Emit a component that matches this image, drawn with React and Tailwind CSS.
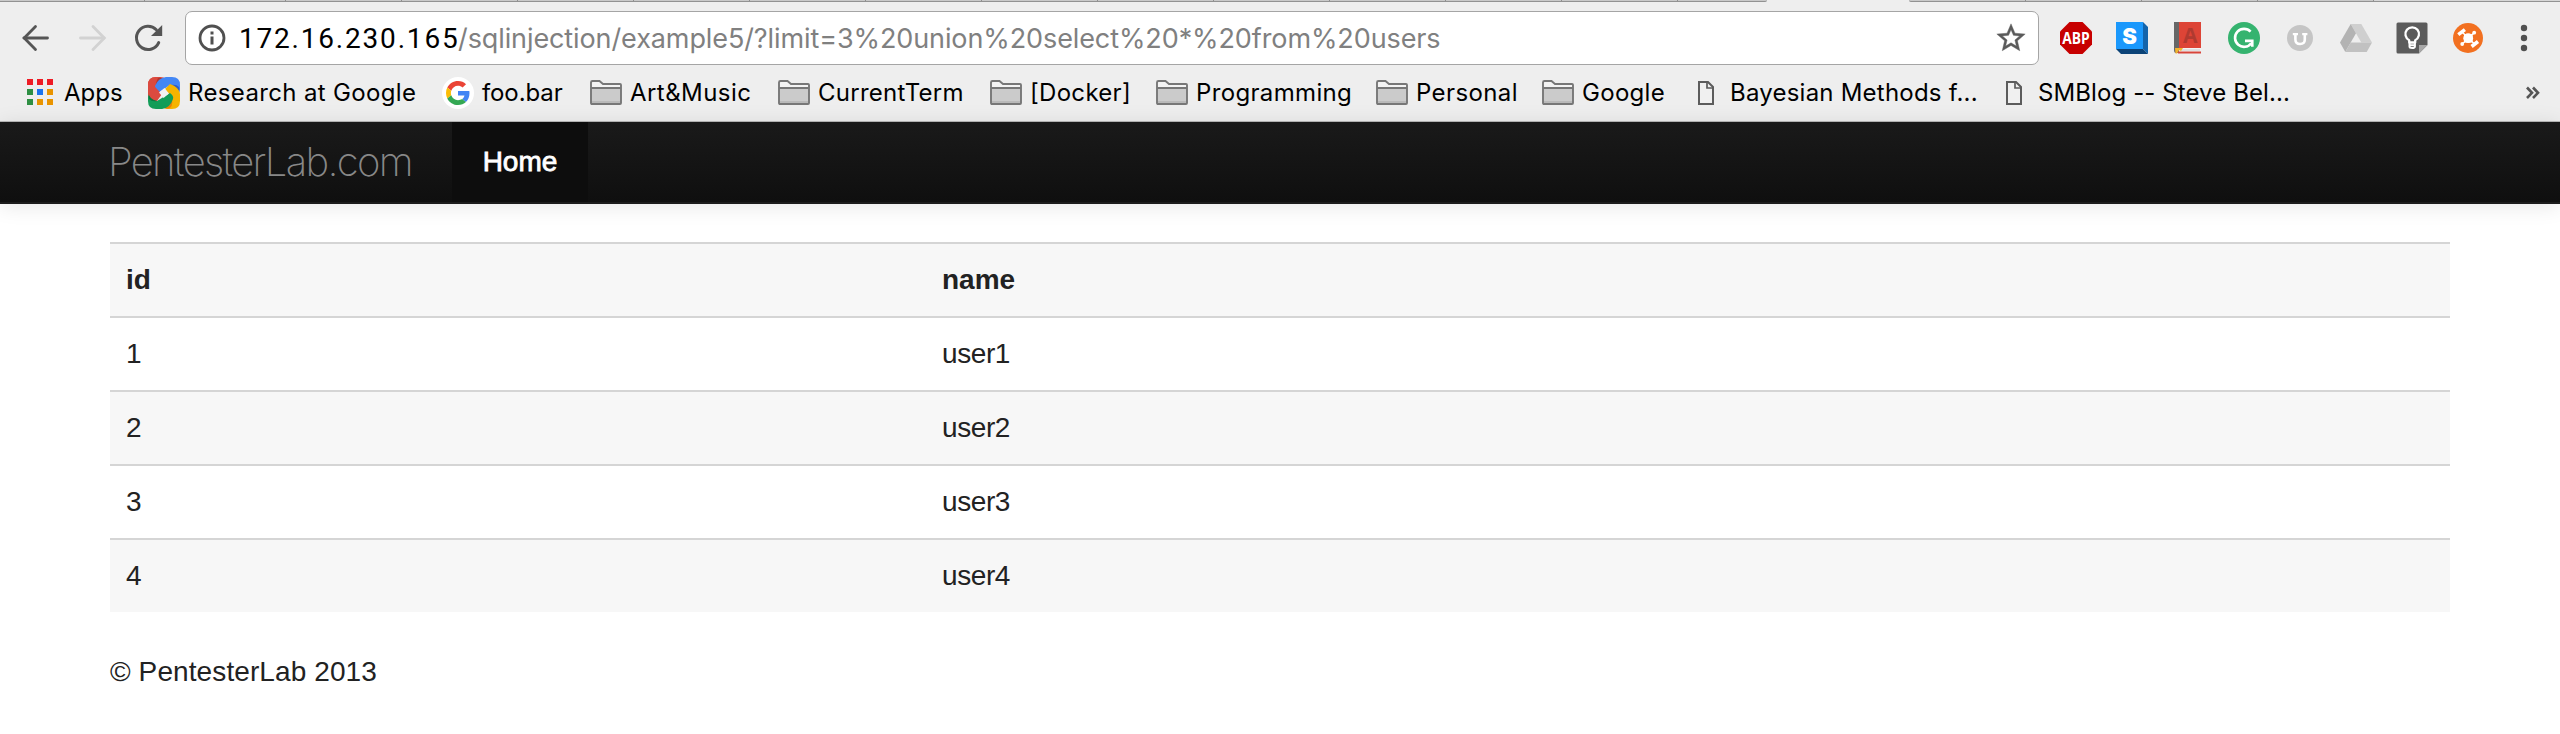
function BackIcon() {
  return (
    <svg className="h-8 w-8 shrink-0" viewBox="0 0 32 32" fill="none" stroke="#555" strokeWidth="2.800">
      <path d="M27.500 16H4" strokeLinecap="round" />
      <path d="M15.500 4.500L4.200 16L15.500 27.500" strokeLinecap="round" />
    </svg>
  );
}

function ForwardIcon() {
  return (
    <svg className="h-8 w-8 shrink-0" viewBox="0 0 32 32" fill="none" stroke="#d2d2d2" strokeWidth="2.800">
      <path d="M4.500 16H28" strokeLinecap="round" />
      <path d="M17 4.500L28.300 16L17 27.500" strokeLinecap="round" />
    </svg>
  );
}

function ReloadIcon() {
  return (
    <svg className="h-8 w-8 shrink-0" viewBox="0 0 32 32" fill="none">
      <path d="M24.300 7.700A11.600 11.600 0 1 0 26.700 20.600" stroke="#555" strokeWidth="3" strokeLinecap="round" />
      <path d="M30.200 3V14H19z" fill="#555" />
    </svg>
  );
}

function InfoIcon() {
  return (
    <svg className="h-7 w-7 shrink-0" viewBox="0 0 28 28" fill="none">
      <circle cx="14" cy="14" r="12" stroke="#505050" strokeWidth="2.8" />
      <path d="M12.500 7.500h3v3h-3zM12.500 12.500h3v8h-3z" fill="#505050" />
    </svg>
  );
}

function StarIcon() {
  return (
    <svg className="h-[34px] w-[34px] shrink-0" viewBox="0 0 24 24" fill="#5a5a5a" stroke="#5a5a5a" strokeWidth="0.300">
      <path d="M22 9.240l-7.190-.62L12 2 9.190 8.630 2 9.240l5.460 4.730L5.820 21 12 17.270 18.180 21l-1.630-7.030L22 9.240zM12 15.400l-3.760 2.270 1-4.280-3.320-2.880 4.380-.38L12 6.100l1.710 4.040 4.380.38-3.320 2.880 1 4.280L12 15.400z" />
    </svg>
  );
}

function AdblockIcon() {
  return (
    <svg className="h-8 w-8" viewBox="0 0 32 32">
      <path d="M9.500 0h13L32 9.500v13L22.500 32h-13L0 22.500v-13z" fill="#c70000" />
      <text x="2.300" y="21.600" fill="#fff" fontFamily="Open Sans, sans-serif" fontWeight="700" fontSize="15.500" textLength="27.500" lengthAdjust="spacingAndGlyphs">ABP</text>
    </svg>
  );
}

function StylishIcon() {
  return (
    <svg className="h-8 w-8" viewBox="0 0 32 32">
      <path d="M27 0L32 5V32L27 27z" fill="#1364ab" />
      <path d="M0 27H27L32 32H5z" fill="#0b4377" />
      <path d="M0 0H27V27H0z" fill="#1a98fc" />
      <text x="13.500" y="21.500" fill="#fff" textAnchor="middle" fontFamily="Inter, sans-serif" fontWeight="900" fontSize="22">S</text>
    </svg>
  );
}

function DictionaryIcon() {
  return (
    <svg className="h-8 w-8" viewBox="0 0 32 32">
      <path d="M2 0H8V31H4Q2 31 2 28z" fill="#666" />
      <path d="M7 0H29V26H7z" fill="#dd4436" />
      <path d="M7 26H28.500V30H7z" fill="#f3f3f3" />
      <path d="M9 28H28" stroke="#ccc" strokeWidth="1" />
      <path d="M6 29.500H29V31.500H6z" fill="#d8453a" />
      <path d="M3 26H11L9 29L7 28L5 31.500H3.500z" fill="#f4b32c" />
      <text x="18.200" y="20.500" fill="#b03a30" textAnchor="middle" fontFamily="Open Sans, sans-serif" fontWeight="700" fontSize="21">A</text>
    </svg>
  );
}

function GrammarIcon() {
  return (
    <svg className="h-8 w-8" viewBox="0 0 32 32" fill="none">
      <circle cx="16" cy="16" r="16" fill="#35b36f" />
      <path d="M22.600 9.700A9 9 0 1 0 23.300 21.200" stroke="#fff" strokeWidth="2.600" />
      <path d="M17 18.900H24.300V24.800" stroke="#fff" strokeWidth="2.600" />
    </svg>
  );
}

function UnderlineIcon() {
  return (
    <svg className="h-8 w-8" viewBox="0 0 32 32" fill="none" stroke="#fff">
      <circle cx="16" cy="16" r="13" fill="#c5c5c5" stroke="none" />
      <path d="M8.800 12.200H14M18.200 12.200H23.400" strokeWidth="2.200" />
      <path d="M11.400 12V17.500Q11.400 22 16.100 22T20.800 17.500V12" strokeWidth="2.600" />
    </svg>
  );
}

function DriveIcon() {
  return (
    <svg className="h-8 w-8" viewBox="0 0 32 32">
      <path d="M10.700 2H21.300L32 20.500H21.300z" fill="#cfcfcf" />
      <path d="M10.700 2L0 20.500L5.300 30L16 11.300z" fill="#b3b3b3" />
      <path d="M5.300 30L10.700 20.500H32L26.700 30z" fill="#c1c1c1" />
    </svg>
  );
}

function KeepIcon() {
  return (
    <svg className="h-8 w-8" viewBox="0 0 32 32" fill="none">
      <path d="M2 .5H30Q31.500 .5 31.500 2V23L23 31.500H2Q.5 31.500 .5 30V2Q.5 .5 2 .5z" fill="#5b5b5b" />
      <path d="M23 23H31.500L23 31.500z" fill="#a8a8a8" />
      <path d="M13.200 20.500V18.200A6.800 6.800 0 1 1 19.200 18.200V20.500z" stroke="#fff" strokeWidth="2.300" strokeLinejoin="round" />
      <path d="M13.500 21V24.500Q13.500 26 16.200 26T18.900 24.500V21M13.500 23.300H18.900" stroke="#fff" strokeWidth="2" />
    </svg>
  );
}

function OrangeIcon() {
  return (
    <svg className="h-8 w-8" viewBox="0 0 32 32" fill="none" stroke="#fff">
      <circle cx="16" cy="16" r="15" fill="#f27020" stroke="none" />
      <path d="M10 10L22.500 22M10.300 22L22 10.800" strokeWidth="1.600" />
      <path d="M12 12H20.500V20.500H12z" fill="#fff" stroke="none" />
      <circle cx="16.200" cy="16.200" r="4.900" fill="#fff" stroke="none" />
      <path d="M6.300 12.600L12.900 7.600M19.600 24.500L26 19.500" strokeWidth="3.600" />
      <circle cx="22.200" cy="10.700" r="1.900" fill="#fff" stroke="none" />
      <circle cx="10.200" cy="22" r="1.900" fill="#fff" stroke="none" />
    </svg>
  );
}

function MenuIcon() {
  return (
    <svg className="h-8 w-8" viewBox="0 0 32 32" fill="#505050">
      <circle cx="16" cy="6" r="3.200" />
      <circle cx="16" cy="16" r="3.200" />
      <circle cx="16" cy="26" r="3.200" />
    </svg>
  );
}

function AppsIcon() {
  return (
    <svg className="h-8 w-8 shrink-0" viewBox="0 0 32 32">
      <path d="M3 2h6v6H3zM13 2h6v6h-6zM23 2h6v6h-6z" fill="#ee1c25" />
      <path d="M3 12h6v6H3zM3 22h6v6H3z" fill="#2e8f43" />
      <path d="M13 12h6v6h-6z" fill="#1a73f0" />
      <path d="M23 12h6v6h-6zM13 22h6v6h-6zM23 22h6v6h-6z" fill="#e99400" />
    </svg>
  );
}

function ResearchIcon() {
  return (
    <svg className="h-8 w-8 shrink-0" viewBox="0 0 32 32">
      <path d="M8 0H12Q17 0 18 3L8 10L13 16L2 25Q0 24 0 20V8Q0 0 8 0z" fill="#db4a3f" />
      <path d="M10 1Q14 0 17 3L8 9Q8 4 10 1z" fill="#b3362d" />
      <path d="M7 9Q10 1 18 0H24Q32 0 32 8V12Q32 17 29 18L22 8L16 12L10 16Q6 13 7 9z" fill="#4387f5" />
      <path d="M31 10Q32 14 29 17L23 8Q28 7 31 10z" fill="#2d5fc4" />
      <path d="M22 7Q31 10 32 17V24Q32 32 24 32H20Q16 32 14 29L24 22L17 12z" fill="#f5b400" />
      <path d="M22 31Q17 33 14 29L24 23Q25 28 22 31z" fill="#ee8100" />
      <path d="M25 22Q22 31 14 32H8Q0 32 0 24V20Q0 17 3 15L9 24L22 16Q26 19 25 22z" fill="#129d58" />
      <path d="M1 22Q0 17 3 15L9 24Q4 25 1 22z" fill="#0a7540" />
      <path d="M0 8Q0 0 8 0H10Q4 8 8 11L14 17L9 24Q1 22 0 15z" fill="#db4a3f" />
      <path d="M11 15.500L16.500 11L21 16.500L15.500 21z" fill="#f1f1f1" />
    </svg>
  );
}

function GoogleIcon() {
  return (
    <svg className="h-8 w-8 shrink-0" viewBox="-8 -8 64 64">
      <circle cx="24" cy="24" r="32" fill="#fff" />
      <path d="M24 9.500c3.540 0 6.710 1.220 9.210 3.600l6.850-6.850C35.900 2.380 30.470 0 24 0 14.620 0 6.510 5.380 2.560 13.220l7.980 6.190C12.430 13.720 17.740 9.500 24 9.500z" fill="#ea4335" />
      <path d="M46.980 24.550c0-1.570-.15-3.090-.38-4.550H24v9.020h12.940c-.58 2.960-2.260 5.480-4.780 7.180l7.730 6c4.510-4.180 7.090-10.360 7.090-17.650z" fill="#4285f4" />
      <path d="M10.530 28.590c-.48-1.450-.76-2.990-.76-4.590s.27-3.140.76-4.590l-7.980-6.190C.92 16.460 0 20.120 0 24c0 3.880.92 7.540 2.560 10.780l7.970-6.190z" fill="#fbbc05" />
      <path d="M24 48c6.480 0 11.930-2.130 15.890-5.810l-7.730-6c-2.150 1.450-4.920 2.300-8.160 2.300-6.260 0-11.570-4.220-13.470-9.910l-7.980 6.190C6.510 42.620 14.620 48 24 48z" fill="#34a853" />
    </svg>
  );
}

function FolderIcon() {
  return (
    <svg className="h-8 w-8 shrink-0" viewBox="0 0 32 32">
      <path d="M1 26V5.500Q1 4 2.500 4H9.500L13 7H30Q31 7 31 8V26Q31 27 30 27H2Q1 27 1 26z" fill="#f3f3f3" />
      <path d="M1 11H31V27H1z" fill="#cbcbcb" />
      <path d="M2 24H30V26H2z" fill="#b9b9b9" />
      <path d="M1 26V5.500Q1 4 2.500 4H9.500L13 7H30Q31 7 31 8V26Q31 27 30 27H2Q1 27 1 26zM1 11H31" fill="none" stroke="#777" strokeWidth="1.900" />
    </svg>
  );
}

function PageIcon() {
  return (
    <svg className="h-8 w-8 shrink-0" viewBox="0 0 32 32" fill="none" stroke="#5c5c5c" strokeWidth="2">
      <path d="M9 5H18L23 10V27H9z" fill="#f0f0f0" />
      <path d="M17 5V11H23" strokeWidth="1.700" />
    </svg>
  );
}

const bookmarks = [
  { Icon: AppsIcon, label: "Apps", box: "w-[124px] tracking-normal" },
  { Icon: ResearchIcon, label: "Research at Google", box: "w-[294px] tracking-[0.35px]" },
  { Icon: GoogleIcon, label: "foo.bar", box: "w-[148px] tracking-[-0.1px]" },
  { Icon: FolderIcon, label: "Art&Music", box: "w-[188px] tracking-[0.45px]" },
  { Icon: FolderIcon, label: "CurrentTerm", box: "w-[212px] tracking-[0.25px]" },
  { Icon: FolderIcon, label: "[Docker]", box: "w-[166px] tracking-[0.3px]" },
  { Icon: FolderIcon, label: "Programming", box: "w-[220px] tracking-[0.35px]" },
  { Icon: FolderIcon, label: "Personal", box: "w-[166px] tracking-[0.4px]" },
  { Icon: FolderIcon, label: "Google", box: "w-[148px] tracking-[0.3px]" },
  { Icon: PageIcon, label: "Bayesian Methods f...", box: "w-[308px] tracking-[0.22px]" },
  { Icon: PageIcon, label: "SMBlog -- Steve Bel...", box: "w-[300px] tracking-[0.1px]" },
];

const extensions = [
  AdblockIcon,
  StylishIcon,
  DictionaryIcon,
  GrammarIcon,
  UnderlineIcon,
  DriveIcon,
  KeepIcon,
  OrangeIcon,
  MenuIcon,
];

const tabWidths = [
  "w-[145px]", "w-[141px]", "w-[116px]", "w-[116px]", "w-[116px]", "w-[116px]", "w-[116px]",
  "w-[116px]", "w-[116px]", "w-[116px]", "w-[116px]", "w-[116px]", "w-[116px]", "w-[116px]",
];

const users = [
  { id: 1, name: "user1" },
  { id: 2, name: "user2" },
  { id: 3, name: "user3" },
  { id: 4, name: "user4" },
];

function TabStrip() {
  return (
    <div className="flex h-0.5">
      <div className="flex w-[1767px] overflow-hidden rounded-br-xs border-b border-[#929292] bg-[#c9c9c9]">
        {tabWidths.map((w, i) => (
          <div key={i} className={`${w} shrink-0 border-r border-[#8f8f8f]`} />
        ))}
      </div>
      <div className="w-[142px]" />
      <div className="flex flex-1 rounded-bl-xs border-b border-[#929292] bg-[#c9c9c9]">
        <div className="w-[117px] border-r border-[#8f8f8f]" />
        <div className="w-[116px] border-r border-[#8f8f8f]" />
        <div className="w-[116px] border-r border-[#8f8f8f]" />
        <div className="w-[116px] border-r border-[#8f8f8f]" />
        <div className="flex-1 bg-[#d6d6d6]" />
      </div>
    </div>
  );
}

function Toolbar() {
  return (
    <div className="flex h-[72px] items-center pl-5">
      <div className="flex items-center gap-6">
        <BackIcon />
        <ForwardIcon />
        <ReloadIcon />
      </div>
      <div className="ml-[21px] flex h-[54px] w-[1854px] items-center rounded-[7px] border border-[#a5a5a5] bg-white pr-2.5 pl-3">
        <InfoIcon />
        <div className="ml-[13px] flex flex-1 items-baseline pt-0.5 text-[27px] leading-8 whitespace-nowrap text-[#808080]">
          <div className="w-[219px] font-['Roboto',sans-serif] text-[28px] tracking-[1.8px] text-black">172.16.230.165</div>
          <div className="tracking-[-0.1px]">/sqlinjection/example5/?limit=3%20union%20select%20*%20from%20users</div>
        </div>
        <StarIcon />
      </div>
      <div className="ml-[21px] flex items-center gap-6">
        {extensions.map((Icon, i) => (
          <Icon key={i} />
        ))}
      </div>
    </div>
  );
}

function BookmarksBar() {
  return (
    <div className="flex h-[48px] items-start border-b border-[#b9b9b9] pt-[3px] pl-6">
      {bookmarks.map(({ Icon, label, box }) => (
        <div key={label} className={`${box} flex shrink-0 items-center gap-2`}>
          <Icon />
          <span className="text-[24px] leading-8 whitespace-nowrap text-black">{label}</span>
        </div>
      ))}
      <svg className="mt-2 ml-[226px] h-4 w-4" viewBox="0 0 16 16" fill="none" stroke="#555" strokeWidth="2.600">
        <path d="M3 2.500L8 7.800L3 13M9 2.500L14 7.800L9 13" />
      </svg>
    </div>
  );
}

export default function App() {
  return (
    <div className="flex h-[734px] w-[2560px] flex-col overflow-hidden bg-white font-['Liberation_Sans',sans-serif] text-[28px] leading-10 text-[#222]">
      <header className="h-[122px] bg-[#eee] font-['Inter',sans-serif]">
        <TabStrip />
        <Toolbar />
        <BookmarksBar />
      </header>

      <nav className="flex h-[82px] shrink-0 border-b-2 border-[#1c1c1c] bg-linear-to-b from-[#1a1a1a] to-[#0f0f0f] pl-[108px] shadow-[0_2px_20px_rgba(0,0,0,0.1)]">
        <div className="flex w-[344px] items-center font-['Inter',sans-serif] text-[40px] font-extralight tracking-[-1.7px] text-[#888]">
          PentesterLab.com
        </div>
        <div className="flex w-[136px] items-center justify-center bg-[#0d0d0d] text-white [-webkit-text-stroke:0.8px_white]">
          Home
        </div>
      </nav>

      <main className="px-[110px] pt-[38px]">
        <table className="w-full table-fixed border-separate border-spacing-0 text-left">
          <colgroup>
            <col className="w-[816px]" />
            <col />
          </colgroup>
          <tbody>
            <tr className="h-[74px] bg-[#f7f7f7]">
              <th className="border-t-2 border-[#d5d5d5] px-4 font-bold">id</th>
              <th className="border-t-2 border-[#d5d5d5] px-4 font-bold">name</th>
            </tr>
            {users.map((user) => (
              <tr key={user.id} className="h-[74px] odd:bg-[#f7f7f7]">
                <td className="border-t-2 border-[#d5d5d5] px-4">{user.id}</td>
                <td className="border-t-2 border-[#d5d5d5] px-4 tracking-[-0.4px]">{user.name}</td>
              </tr>
            ))}
          </tbody>
        </table>
        <footer className="pt-10 tracking-[0.1px]">© PentesterLab 2013</footer>
      </main>
    </div>
  );
}
